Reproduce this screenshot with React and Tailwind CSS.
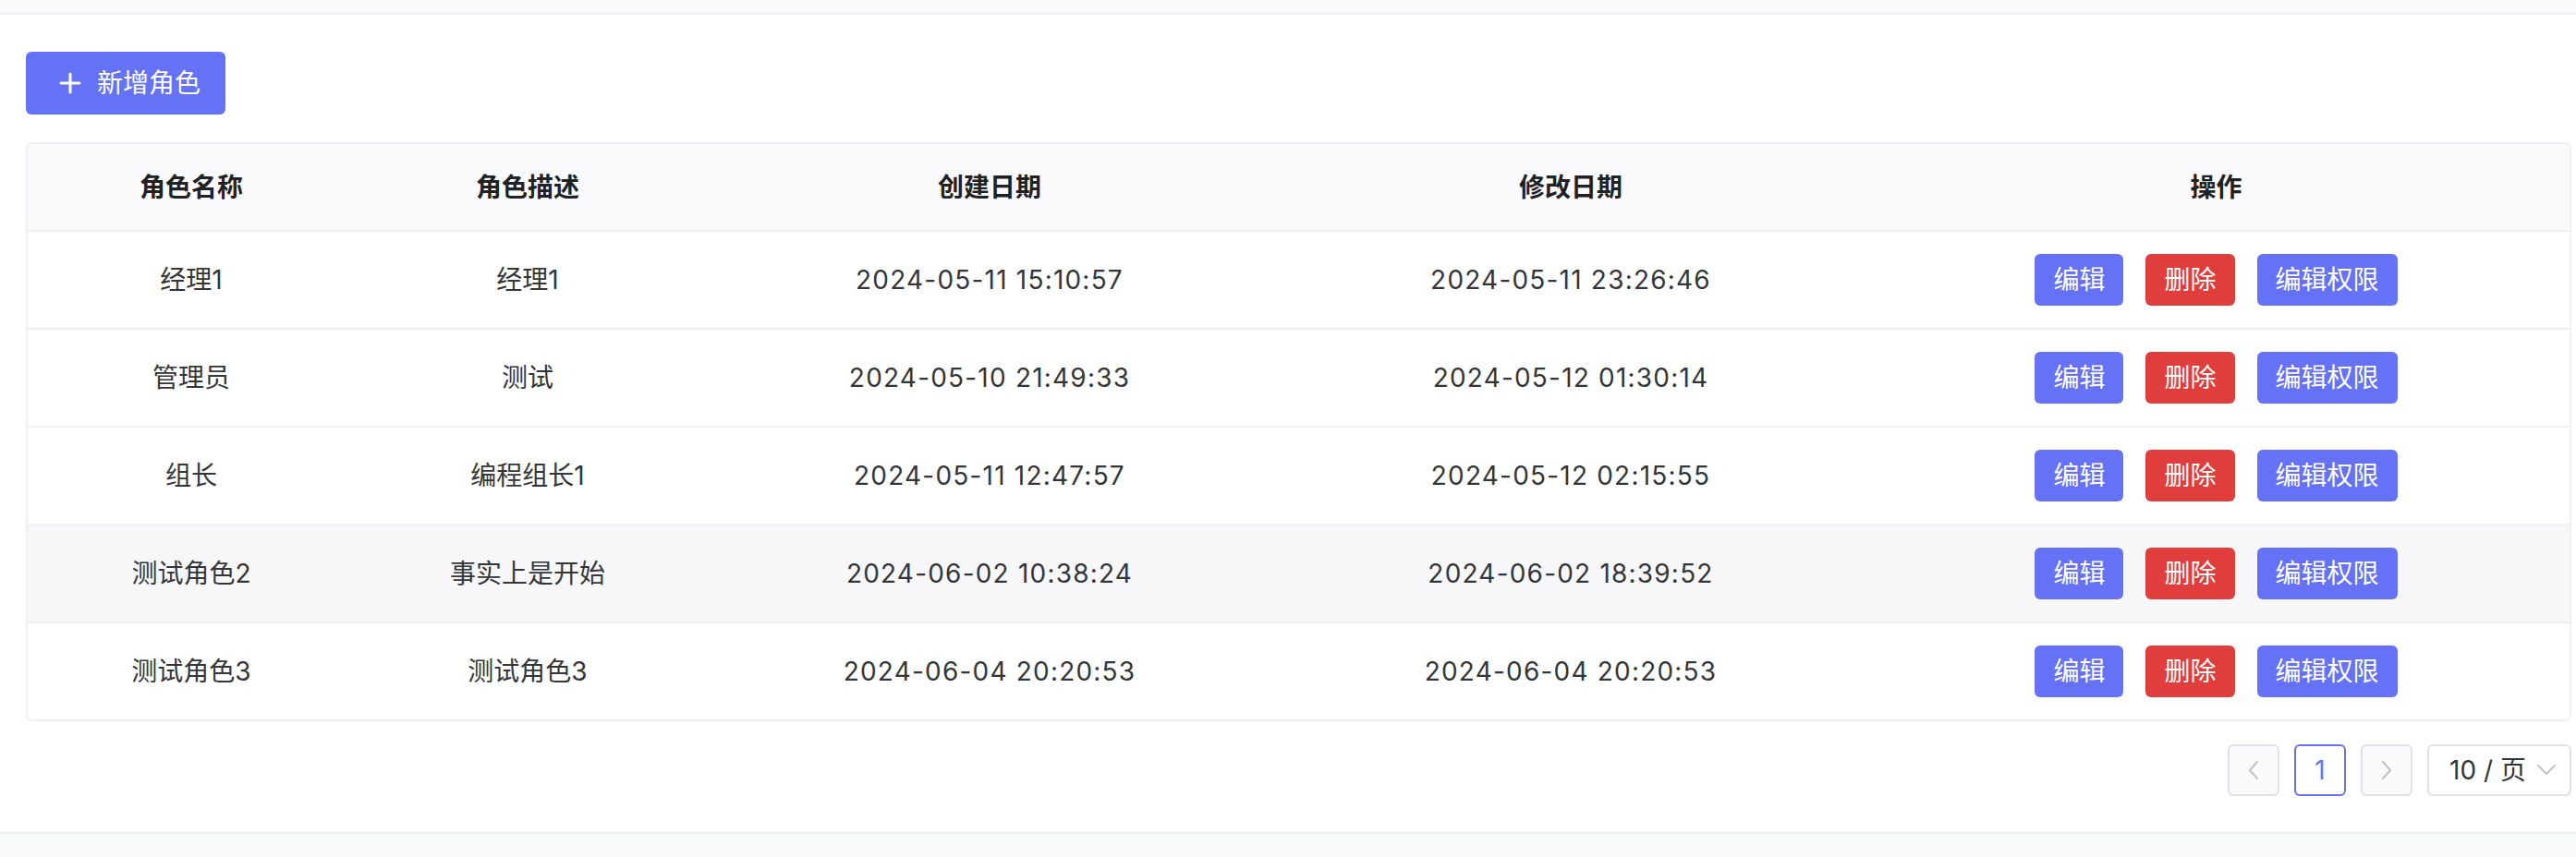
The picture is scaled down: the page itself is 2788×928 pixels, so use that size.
import React from "react";

const rows = [
  { name: "经理1", desc: "经理1", created: "2024-05-11 15:10:57", updated: "2024-05-11 23:26:46" },
  { name: "管理员", desc: "测试", created: "2024-05-10 21:49:33", updated: "2024-05-12 01:30:14" },
  { name: "组长", desc: "编程组长1", created: "2024-05-11 12:47:57", updated: "2024-05-12 02:15:55" },
  { name: "测试角色2", desc: "事实上是开始", created: "2024-06-02 10:38:24", updated: "2024-06-02 18:39:52", hover: true },
  { name: "测试角色3", desc: "测试角色3", created: "2024-06-04 20:20:53", updated: "2024-06-04 20:20:53" },
];

const cols = "grid grid-cols-[354px_374px_626px_632px_1fr]";

const Chevron = ({ dir }) => (
  <svg width="16" height="22" viewBox="0 0 16 22" fill="none">
    <path
      d={dir === "left" ? "M12 2 L4 11 L12 20" : "M4 2 L12 11 L4 20"}
      stroke="#c2c2c6"
      strokeWidth="2"
      strokeLinecap="round"
      strokeLinejoin="round"
    />
  </svg>
);

export default function App() {
  return (
    <div
      className="w-[2788px] h-[928px] bg-[#f8f9fb] flex flex-col"
      style={{ fontFamily: "Inter, 'Noto Sans CJK SC', sans-serif" }}
    >
      <div className="h-[14px] shrink-0 border-b-2 border-[#efeff5] box-content" />

      <div className="bg-white pt-[40px] pl-[28px] pr-[5px] h-[887px] shrink-0 border-b-2 border-[#efeff5] box-border">
        <button className="h-[68px] w-[216px] rounded-[6px] bg-[#6672f5] text-white text-[28px] flex items-center pl-[36px] gap-[17px]">
          <svg width="24" height="24" viewBox="0 0 24 24" fill="none">
            <path d="M12 2 V22 M2 12 H22" stroke="white" strokeWidth="3" strokeLinecap="round" />
          </svg>
          <span>新增角色</span>
        </button>

        <div className="mt-[30px] border-2 border-[#efeff5] rounded-[6px] overflow-hidden text-[28px]">
          <div className={`${cols} h-[95px] bg-[#fafafc] border-b-2 border-[#efeff5] items-center text-center font-semibold text-[#1f2225]`}>
            <div>角色名称</div>
            <div>角色描述</div>
            <div>创建日期</div>
            <div>修改日期</div>
            <div>操作</div>
          </div>
          {rows.map((r, i) => (
            <div
              key={i}
              className={`${cols} h-[104px] items-center text-center text-[#333639] ${
                i < rows.length - 1 ? "border-b-2 border-[#efeff5] box-content" : ""
              } ${r.hover ? "bg-[#f7f7fa]" : "bg-white"}`}
            >
              <div>{r.name}</div>
              <div>{r.desc}</div>
              <div className="tracking-[1.2px]">{r.created}</div>
              <div className="tracking-[1.2px]">{r.updated}</div>
              <div className="flex justify-center gap-[24px] text-white">
                <button className="h-[56px] px-[20px] rounded-[6px] bg-[#6672f5]">编辑</button>
                <button className="h-[56px] px-[20px] rounded-[6px] bg-[#e03d3d]">删除</button>
                <button className="h-[56px] px-[20px] rounded-[6px] bg-[#6672f5]">编辑权限</button>
              </div>
            </div>
          ))}
        </div>

        <div className="mt-[25px] flex justify-end items-center gap-[16px] text-[28px]">
          <div className="h-[56px] w-[56px] rounded-[6px] border-2 border-[#e0e0e6] bg-[#fafafc] flex items-center justify-center">
            <Chevron dir="left" />
          </div>
          <div className="h-[56px] w-[56px] rounded-[6px] border-2 border-[#6672f5] text-[#6672f5] flex items-center justify-center">
            1
          </div>
          <div className="h-[56px] w-[56px] rounded-[6px] border-2 border-[#e0e0e6] bg-[#fafafc] flex items-center justify-center">
            <Chevron dir="right" />
          </div>
          <div className="h-[56px] w-[156px] rounded-[6px] border-2 border-[#e0e0e6] flex items-center pl-[22px] gap-[12px] text-[#333639]">
            <span>10 / 页</span>
            <svg width="20" height="12" viewBox="0 0 20 12" fill="none">
              <path d="M1 1 L10 10 L19 1" stroke="#c2c2c6" strokeWidth="2" strokeLinecap="round" strokeLinejoin="round" />
            </svg>
          </div>
        </div>
      </div>
    </div>
  );
}
